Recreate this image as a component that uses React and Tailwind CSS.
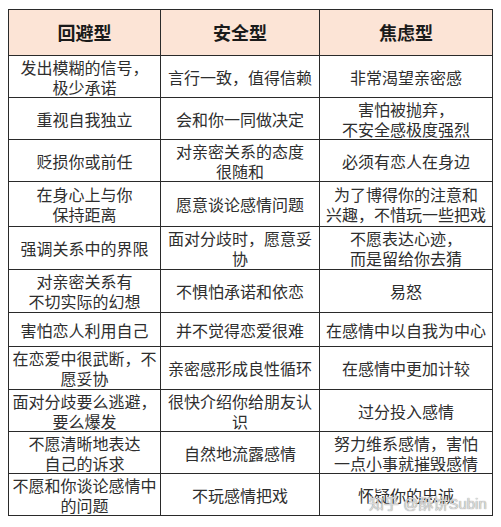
import React from "react";

const rows = [
  { h: 42, c: [["发出模糊的信号，", "极少承诺"], ["言行一致，值得信赖"], ["非常渴望亲密感"]] },
  { h: 42, c: [["重视自我独立"], ["会和你一同做决定"], ["害怕被抛弃，", "不安全感极度强烈"]] },
  { h: 42, c: [["贬损你或前任"], ["对亲密关系的态度", "很随和"], ["必须有恋人在身边"]] },
  { h: 45, c: [["在身心上与你", "保持距离"], ["愿意谈论感情问题"], ["为了博得你的注意和", "兴趣，不惜玩一些把戏"]] },
  { h: 43, c: [["强调关系中的界限"], ["面对分歧时，愿意妥", "协"], ["不愿表达心迹，", "而是留给你去猜"]] },
  { h: 43, c: [["对亲密关系有", "不切实际的幻想"], ["不惧怕承诺和依恋"], ["易怒"]] },
  { h: 34, c: [["害怕恋人利用自己"], ["并不觉得恋爱很难"], ["在感情中以自我为中心"]] },
  { h: 43, c: [["在恋爱中很武断，不", "愿妥协"], ["亲密感形成良性循环"], ["在感情中更加计较"]] },
  { h: 42, c: [["面对分歧要么逃避，", "要么爆发"], ["很快介绍你给朋友认", "识"], ["过分投入感情"]] },
  { h: 42, c: [["不愿清晰地表达", "自己的诉求"], ["自然地流露感情"], ["努力维系感情，害怕", "一点小事就摧毁感情"]] },
  { h: 42, c: [["不愿和你谈论感情中", "的问题"], ["不玩感情把戏"], ["怀疑你的忠诚"]] },
];

const widths = ["w-[152px]", "w-[159px]", "w-[173px]"];

export default function App() {
  return (
    <div
      className="relative w-[501px] h-[527px] bg-white pl-[8px] pt-[9px]"
      style={{ fontFamily: '"Noto Sans CJK SC", "Noto Sans", sans-serif' }}
    >
      <div className="flex flex-col w-[485px] border-l border-t border-[#2a2a2a]">
        <div className="flex h-[46px] bg-[#fce4d6]">
          {["回避型", "安全型", "焦虑型"].map((t, i) => (
            <div
              key={t}
              className={`${widths[i]} flex items-center justify-center border-r border-b border-[#2a2a2a] text-[18px] font-bold text-[#1a1a1a]`}
            >
              {t}
            </div>
          ))}
        </div>
        {rows.map((r, ri) => (
          <div key={ri} className="flex" style={{ height: r.h }}>
            {r.c.map((lines, ci) => (
              <div
                key={ci}
                className={`${widths[ci]} flex flex-col items-center justify-center border-r border-b border-[#2a2a2a] text-[16px] leading-[20px] text-[#2e2e2e] whitespace-nowrap`}
              >
                {lines.map((l, li) => (
                  <span key={li}>{l}</span>
                ))}
              </div>
            ))}
          </div>
        ))}
      </div>
      <div
        className="absolute left-[369px] top-[494px] text-[15px] leading-[20px] text-[rgba(230,230,230,0.9)] [text-shadow:0_0_1px_#666] whitespace-nowrap"
        style={{ fontFamily: '"Liberation Sans", "Noto Sans CJK SC", sans-serif' }}
      >
        知乎 @酥饼Subin
      </div>
    </div>
  );
}
